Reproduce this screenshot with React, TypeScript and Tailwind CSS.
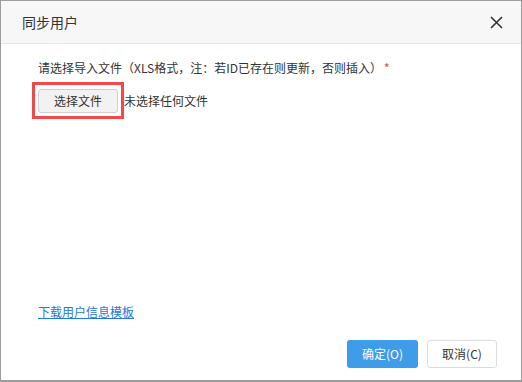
import React from "react";

const CloseIcon = () => (
  <svg width="13" height="13" viewBox="0 0 13 13" fill="none">
    <path d="M1 1L12 12M12 1L1 12" stroke="#333" strokeWidth="1.6" />
  </svg>
);

export default function App() {
  return (
    <div
      className="w-[522px] h-[382px] flex flex-col bg-white border-t border-l border-r border-b-2 border-[#9c9c9c] text-[#333]"
      style={{ fontFamily: '"Noto Sans CJK SC", "Microsoft YaHei", sans-serif' }}
    >
      <div className="h-[43px] flex items-center justify-between pl-[21px] pr-[17px] bg-[#f7f7f7] border-b border-[#e6e6e6]">
        <span className="text-[14px] leading-[20px] text-[#333]">同步用户</span>
        <button className="flex items-center justify-center w-[16px] h-[16px] cursor-pointer">
          <CloseIcon />
        </button>
      </div>

      <div className="flex-1 flex flex-col px-[37px] pt-[15px]">
        <p className="text-[12px] leading-[18px] text-[#333]">
          请选择导入文件（XLS格式，注：若ID已存在则更新，否则插入）
          <span className="text-[#f03c3c] ml-[2px]">*</span>
        </p>
        <div className="flex items-center mt-[5px] -ml-[6px]">
          <div className="border-[3px] border-[#f24848] px-[3px] pt-[2px] pb-[3px]">
            <button className="w-[80px] h-[24px] rounded-[3px] border border-[#cfcfcf] bg-[#f2f2f2] text-[12px] text-[#333]">
              选择文件
            </button>
          </div>
          <span className="text-[12px] leading-[18px] text-[#333]">未选择任何文件</span>
        </div>
        <div className="flex-1" />
        <a href="#" className="self-start text-[12px] leading-[18px] text-[#2478d8] underline">
          下载用户信息模板
        </a>
      </div>

      <div className="flex justify-end gap-[9px] pr-[24px] pt-[19px] pb-[12px]">
        <button className="w-[71px] h-[28px] rounded-[3px] bg-[#3e9ce8] text-white text-[12px]">
          确定(O)
        </button>
        <button className="w-[70px] h-[28px] rounded-[3px] bg-white border border-[#dcdcdc] text-[#333] text-[12px]">
          取消(C)
        </button>
      </div>
    </div>
  );
}
